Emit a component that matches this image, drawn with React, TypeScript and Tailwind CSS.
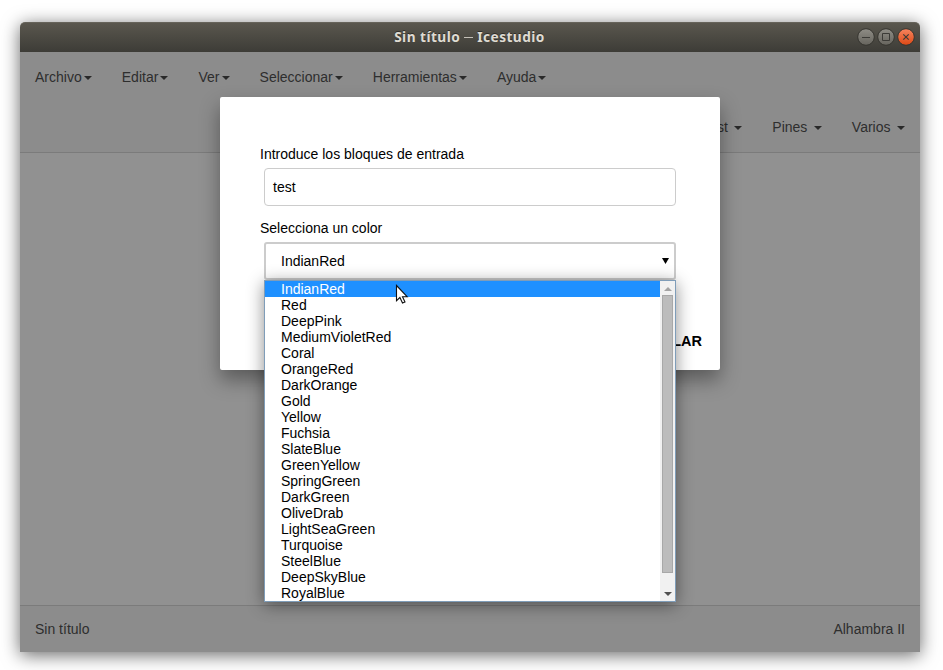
import React from "react";

const leftMenus = ["Archivo", "Editar", "Ver", "Seleccionar", "Herramientas", "Ayuda"];
const rightMenus = ["Test", "Pines", "Varios"];
const colors = [
  "IndianRed", "Red", "DeepPink", "MediumVioletRed", "Coral", "OrangeRed", "DarkOrange",
  "Gold", "Yellow", "Fuchsia", "SlateBlue", "GreenYellow", "SpringGreen", "DarkGreen",
  "OliveDrab", "LightSeaGreen", "Turquoise", "SteelBlue", "DeepSkyBlue", "RoyalBlue",
];

function Caret({ className = "" }: { className?: string }) {
  return (
    <span
      className={`inline-block h-0 w-0 border-x-4 border-t-4 border-x-transparent border-t-[#292929] align-middle ${className}`}
    />
  );
}

function TitleBar() {
  return (
    <header className="relative flex h-[30px] shrink-0 items-center justify-center rounded-t-[5px] border-t border-[#66635a] bg-linear-to-b from-[#5a574e] to-[#3d3c37]">
      <h1 className="flex items-center gap-1 pr-px pb-[2px] font-['Noto_Sans','Open_Sans',sans-serif] text-[13.7px] leading-none font-bold tracking-[0.45px] text-[#dfdbd2] [text-shadow:0_-1px_0_#2e2d29]">
        <span>Sin título</span>
        <span className="mt-[2px] h-px w-[9px] bg-[#c4c0b7]" />
        <span>Icestudio</span>
      </h1>
      <svg className="absolute top-[3px] right-[4px]" width="60" height="22" viewBox="0 0 60 22" fill="none">
        <defs>
          <linearGradient id="grey" x1="0" y1="0" x2="0" y2="1">
            <stop offset="0" stopColor="#8f8d86" />
            <stop offset="1" stopColor="#66645d" />
          </linearGradient>
          <linearGradient id="orange" x1="0" y1="0" x2="0" y2="1">
            <stop offset="0" stopColor="#f58560" />
            <stop offset="1" stopColor="#dd4814" />
          </linearGradient>
        </defs>
        <circle cx="10" cy="11" r="8.3" fill="url(#grey)" stroke="#35342f" />
        <circle cx="30" cy="11" r="8.3" fill="url(#grey)" stroke="#35342f" />
        <circle cx="50" cy="11" r="8.3" fill="url(#orange)" stroke="#35342f" />
        <path d="M6 11.5h8M26.5 7.5h7v7h-7z" stroke="#3c3b37" />
        <path d="M47.3 8.3l5.4 5.4m0-5.4l-5.4 5.4" stroke="#3c3b37" strokeWidth="1.2" />
      </svg>
    </header>
  );
}

function NavBar() {
  return (
    <nav className="h-[101px] shrink-0 border-b border-[#7b7b7b] bg-[#8c8c8c]">
      <ul className="flex h-[50px] items-center">
        {leftMenus.map((m) => (
          <li key={m} className="px-[15px] whitespace-nowrap">
            {m}
            <Caret className="ml-[2.1px]" />
          </li>
        ))}
      </ul>
      <ul className="flex h-[50px] items-center justify-end">
        {rightMenus.map((m) => (
          <li key={m} className="px-[15px] whitespace-nowrap">
            {m} <Caret className="ml-[2.6px]" />
          </li>
        ))}
      </ul>
    </nav>
  );
}

function ColorList() {
  return (
    <div className="absolute top-[38px] left-0 z-10 flex h-[322px] w-[412px] border border-[#7f9db9] bg-white shadow-[0_3px_16px_rgba(0,0,0,0.45)]">
      <ul className="flex-1">
        {colors.map((c, i) => (
          <li
            key={c}
            className={`h-4 pl-4 leading-4 ${i === 0 ? "bg-[#1e90ff] text-white" : "text-black"}`}
          >
            {c}
          </li>
        ))}
      </ul>
      <div className="flex w-[15px] flex-col items-center bg-[#f1f1f1]">
        <div className="flex h-[14px] items-center pt-[2px]">
          <div className="h-0 w-0 border-x-4 border-b-4 border-x-transparent border-b-[#a3a3a3]" />
        </div>
        <div className="h-[278px] w-[11px] border border-[#a8a8a8] bg-[#bcbcbc]" />
        <div className="mt-auto flex h-[15px] items-center">
          <div className="h-0 w-0 border-x-4 border-t-4 border-x-transparent border-t-[#505050]" />
        </div>
      </div>
      <svg className="absolute top-[3px] left-[130px]" width="15" height="22" viewBox="0 0 15 22">
        <path
          d="M1.5 1.5v15.2l3.4-3.2 2.6 5.6 2.5-1.2-2.5-5.2h4.6z"
          fill="#fff"
          stroke="#111"
          strokeWidth="1.1"
        />
      </svg>
    </div>
  );
}

function Dialog() {
  return (
    <div className="absolute top-[75px] left-[200px] flex h-[273px] w-[500px] flex-col rounded-[2px] bg-white px-10 pt-[47px] text-black shadow-[0_10px_20px_rgba(0,0,0,0.38)]">
      <label className="leading-5">Introduce los bloques de entrada</label>
      <div className="mx-1 mt-1 flex h-[38px] w-[412px] items-center rounded-[4px] border border-[#ccc] px-2">
        test
      </div>
      <label className="mt-3 leading-5">Selecciona un color</label>
      <div className="relative mx-1 mt-1 h-[38px] w-[412px]">
        <div className="flex h-full items-center justify-between rounded-[3px] border-2 border-[#ccc] pr-[5px] pl-[15px]">
          IndianRed
          <svg width="7" height="6" viewBox="0 0 7 6">
            <path d="M0 0h7L3.5 6z" fill="#000" />
          </svg>
        </div>
        <ColorList />
      </div>
      <div className="mt-[51px] -mr-[22px] flex justify-end gap-5 text-[14.5px] leading-5 font-bold">
        <button>ACEPTAR</button>
        <button>CANCELAR</button>
      </div>
    </div>
  );
}

export default function App() {
  return (
    <div className="h-[670px] w-[943px] overflow-hidden bg-white pt-[22px] pl-5 font-['Liberation_Sans',Arial,sans-serif] text-[14px] leading-5 text-[#2e2e2e]">
      <div className="relative flex h-[630px] w-[900px] flex-col rounded-t-[5px] shadow-[0_3px_18px_rgba(0,0,0,0.6)]">
        <TitleBar />
        <NavBar />
        <main className="flex-1 bg-[#919191]" />
        <footer className="flex h-[47px] shrink-0 items-center justify-between border-t border-[#7b7b7b] bg-[#8c8c8c] px-[15px]">
          <span>Sin título</span>
          <span>Alhambra II</span>
        </footer>
        <Dialog />
      </div>
    </div>
  );
}
